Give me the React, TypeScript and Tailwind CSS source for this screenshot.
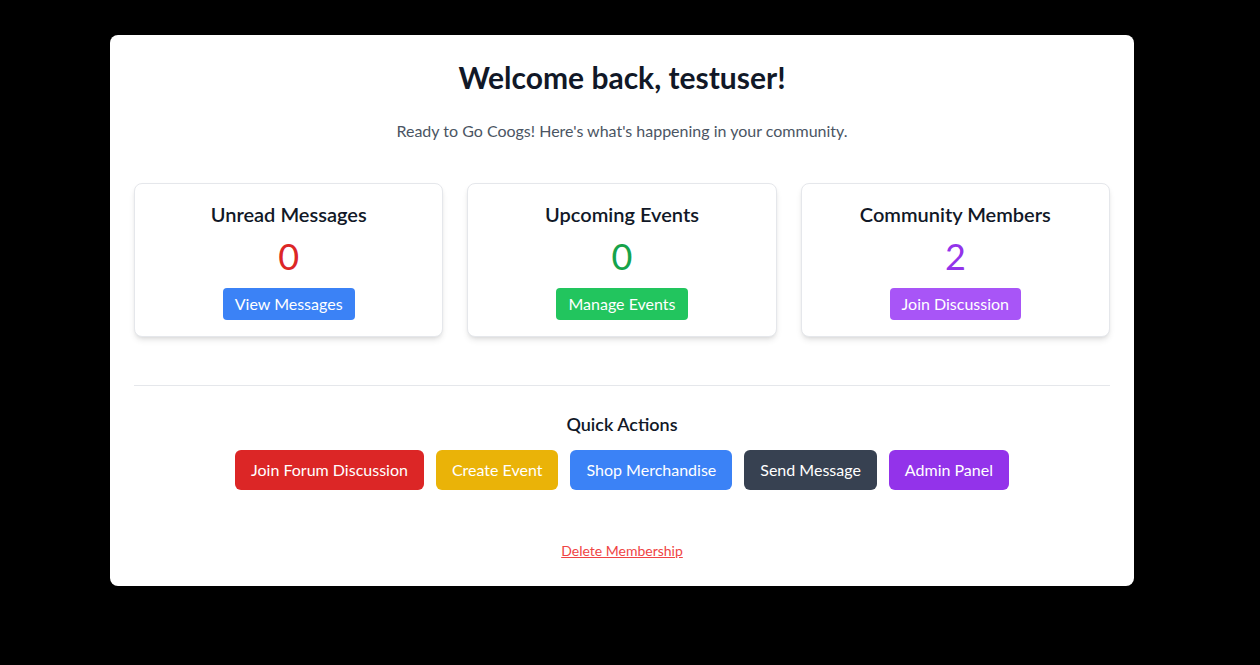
const stats = [
  {
    title: "Unread Messages",
    value: 0,
    valueClass: "text-[#dc2626]",
    action: "View Messages",
    buttonClass: "bg-[#3b82f6] hover:bg-[#2563eb]",
  },
  {
    title: "Upcoming Events",
    value: 0,
    valueClass: "text-[#16a34a]",
    action: "Manage Events",
    buttonClass: "bg-[#22c55e] hover:bg-[#16a34a]",
  },
  {
    title: "Community Members",
    value: 2,
    valueClass: "text-[#9333ea]",
    action: "Join Discussion",
    buttonClass: "bg-[#a855f7] hover:bg-[#9333ea]",
  },
];

const quickActions = [
  { label: "Join Forum Discussion", className: "bg-[#dc2626] hover:bg-[#b91c1c]" },
  { label: "Create Event", className: "bg-[#eab308] hover:bg-[#ca8a04]" },
  { label: "Shop Merchandise", className: "bg-[#3b82f6] hover:bg-[#2563eb]" },
  { label: "Send Message", className: "bg-[#374151] hover:bg-[#1f2937]" },
  { label: "Admin Panel", className: "bg-[#9333ea] hover:bg-[#7e22ce]" },
];

export default function App() {
  return (
    <div className="min-h-screen bg-black py-[35px] pr-4 font-['Lato',sans-serif]">
      <main className="mx-auto max-w-5xl rounded-lg bg-white p-6 text-center">
        <h1 className="text-3xl font-bold text-[#111827]">Welcome back, testuser!</h1>
        <p className="mt-6 text-base text-[#4b5563]">
          Ready to Go Coogs! Here's what's happening in your community.
        </p>

        <div className="mt-10 grid grid-cols-3 gap-6">
          {stats.map((stat) => (
            <section
              key={stat.title}
              className="rounded-lg border border-[#e5e7eb] bg-white p-4 shadow-md"
            >
              <h2 className="mb-2 text-xl font-semibold text-[#111827]">{stat.title}</h2>
              <p className={`mb-3 text-4xl ${stat.valueClass}`}>{stat.value}</p>
              <button
                className={`rounded px-3 py-1 text-base text-white ${stat.buttonClass}`}
              >
                {stat.action}
              </button>
            </section>
          ))}
        </div>

        <hr className="mt-12 border-[#e5e7eb]" />

        <h3 className="mt-6 text-lg font-semibold text-[#111827]">Quick Actions</h3>
        <div className="mt-3 flex justify-center gap-3">
          {quickActions.map((action) => (
            <button
              key={action.label}
              className={`rounded-md px-4 py-2 text-base text-white ${action.className}`}
            >
              {action.label}
            </button>
          ))}
        </div>

        <div className="mt-12">
          <a href="#" className="text-sm text-[#ef4444] underline hover:text-[#dc2626]">
            Delete Membership
          </a>
        </div>
      </main>
    </div>
  );
}
